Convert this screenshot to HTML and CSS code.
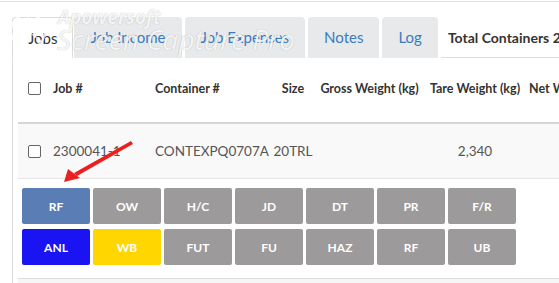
FILE: index.html
```html
<!DOCTYPE html>
<html>
<head>
    <title>Jobs</title>
    <link rel="stylesheet" href="styles.css">
</head>
<body>

<div class="page">
    <div class="tabs">
        <div class="tab active">Jobs</div>
        <div class="tab">Job Income</div>
        <div class="tab">Job Expenses</div>
        <div class="tab">Notes</div>
        <div class="tab">Log</div>
        <div class="tab-info">Total Containers 2</div>
    </div>

    <div class="panel">
        <div class="grid head">
            <div class="cell"><span class="check"></span></div>
            <div class="cell">Job #</div>
            <div class="cell">Container #</div>
            <div class="cell mid">Size</div>
            <div class="cell mid">Gross Weight (kg)</div>
            <div class="cell mid">Tare Weight (kg)</div>
            <div class="cell">Net Weight (kg)</div>
        </div>

        <div class="grid row">
            <div class="cell"><span class="check"></span></div>
            <div class="cell">2300041-1</div>
            <div class="cell">CONTEXPQ0707A</div>
            <div class="cell mid">20TRL</div>
            <div class="cell mid"></div>
            <div class="cell mid">2,340</div>
            <div class="cell"></div>
        </div>

        <div class="btns">
            <div class="btn steel">RF</div>
            <div class="btn">OW</div>
            <div class="btn">H/C</div>
            <div class="btn">JD</div>
            <div class="btn">DT</div>
            <div class="btn">PR</div>
            <div class="btn">F/R</div>
            <div class="btn blue">ANL</div>
            <div class="btn gold">WB</div>
            <div class="btn">FUT</div>
            <div class="btn">FU</div>
            <div class="btn">HAZ</div>
            <div class="btn">RF</div>
            <div class="btn">UB</div>
        </div>
        <div class="foot"></div>
    </div>
</div>

<div class="mark">
    <svg class="mark-logo" width="48" height="48" viewBox="0 0 48 48">
        <circle cx="24" cy="25" r="17" fill="none" stroke="#fff" stroke-width="2" opacity="0.8"/>
        <path d="M10 14 L38 36 M24 8 L24 42 M8 30 L40 18" stroke="#fff" stroke-width="1.5" opacity="0.7"/>
    </svg>
    <div class="mark-small">Apowersoft</div>
    <div class="mark-big">Screen Capture Pro</div>
</div>

<svg class="arrow" width="559" height="283" viewBox="0 0 559 283">
    <polygon points="131,141 133,144 77,176 74,173" fill="#ea1f1f"/>
    <polygon points="64,182 68,169 80,178" fill="#ea1f1f"/>
</svg>

</body>
</html>
```

FILE: styles.css
```css
body {
    margin: 0;
    font-family: Lato, "Open Sans", sans-serif;
    background: #fff;
    border-top: 1px solid #fff;
}

.page {
    border-top: 1px solid #e3e3e3;
    padding-left: 12px;
    height: 281px;
    overflow: hidden;
}

.tabs {
    display: flex;
    gap: 3px;
    margin-top: 15px;
    height: 41px;
    align-items: stretch;
}

.tab {
    background: #e7e9ea;
    color: #3a7cc1;
    font-size: 15px;
    padding: 0 16px;
    border-radius: 4px 4px 0 0;
    display: flex;
    align-items: center;
    white-space: nowrap;
    border-bottom: 1px solid #e7e9ea;
}

.tab.active {
    background: #fff;
    color: #333;
    border: 1px solid #dcdcdc;
    border-bottom: 1px solid #fff;
    padding: 0 15px;
    margin-right: -2px;
}

.tab-info {
    flex: 1;
    display: flex;
    align-items: center;
    padding-left: 7px;
    font-size: 14px;
    font-weight: bold;
    color: #333;
    white-space: nowrap;
    overflow: hidden;
    border-bottom: 1px solid #dedede;
}

.panel {
    border-left: 1px solid #dcdcdc;
    padding-left: 5px;
    height: 240px;
}

.grid {
    display: grid;
    grid-template-columns: 35px 102px 113px 50px 103px 108px 1fr;
    white-space: nowrap;
}

.cell {
    display: flex;
    align-items: center;
}

.cell.mid {
    justify-content: center;
}

.head {
    font-size: 12.5px;
    font-weight: bold;
    color: #333;
    border-bottom: 2px solid #d6d6d6;
    padding-bottom: 3px;
    box-sizing: border-box;
    height: 66px;
}

.row {
    height: 54px;
    background: #f9f9f9;
    font-size: 13.5px;
    color: #555;
    border-bottom: 1px solid #e6e6e6;
}

.check {
    display: block;
    width: 11px;
    height: 11px;
    border: 1px solid #666;
    border-radius: 2px;
    margin-left: 10px;
    background: #fff;
}

.btns {
    display: grid;
    grid-template-columns: repeat(7, 68px);
    grid-auto-rows: 36px;
    column-gap: 3px;
    row-gap: 5px;
    padding: 9px 0 13px 4px;
    border-bottom: 1px solid #dedede;
}

.btn {
    background: #9c9a9a;
    color: #fff;
    font-size: 12px;
    font-weight: bold;
    border-radius: 2px;
    display: flex;
    align-items: center;
    justify-content: center;
}

.btn.steel {
    background: #5a7db5;
}

.btn.blue {
    background: #1a13f2;
}

.btn.gold {
    background: #ffd600;
}

.foot {
    background: #f6f6f6;
    height: 10px;
}

.mark {
    position: absolute;
    left: 4px;
    top: 4px;
    color: rgba(255, 255, 255, 0.9);
    text-shadow: 0 0 1px rgba(0, 0, 0, 0.3);
    font-family: "Open Sans", sans-serif;
    font-style: italic;
    font-weight: bold;
    pointer-events: none;
}

.mark-logo {
    position: absolute;
    left: 0;
    top: 2px;
}

.mark-small {
    position: absolute;
    left: 54px;
    top: 1px;
    font-size: 19px;
    line-height: 24px;
    white-space: nowrap;
}

.mark-big {
    position: absolute;
    left: 53px;
    top: 18px;
    font-size: 28px;
    font-weight: normal;
    line-height: 34px;
    white-space: nowrap;
}

.arrow {
    position: absolute;
    left: 0;
    top: 0;
    pointer-events: none;
}
```
